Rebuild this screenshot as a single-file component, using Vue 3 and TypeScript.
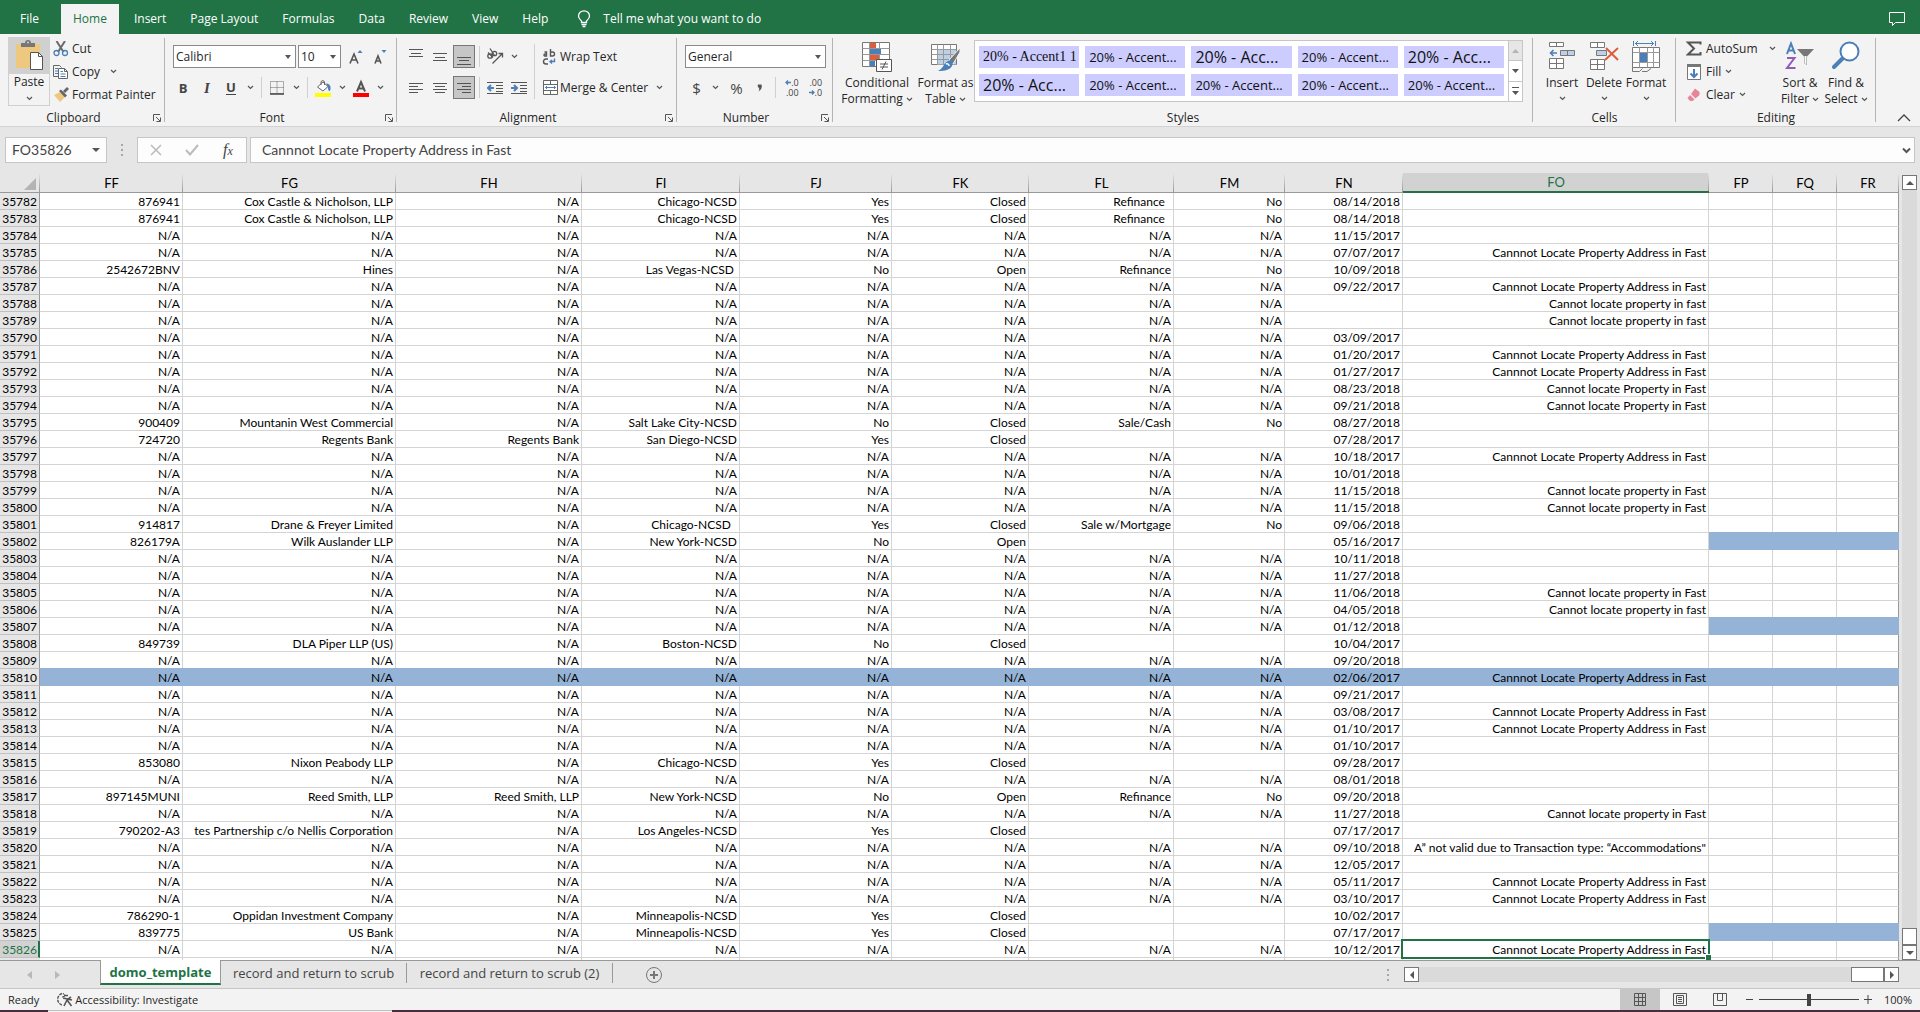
<script setup lang="ts">
import { ref } from 'vue'

interface Column {
  name: string
  width: number | null
}

interface Row {
  id: number
  cells: string[]
  fill: 'none' | 'tail' | 'all'
}

const menu = ['File', 'Home', 'Insert', 'Page Layout', 'Formulas', 'Data', 'Review', 'View', 'Help']

const columns: Column[] = [
  { name: 'FF', width: 143 },
  { name: 'FG', width: 213 },
  { name: 'FH', width: 186 },
  { name: 'FI', width: 158 },
  { name: 'FJ', width: 152 },
  { name: 'FK', width: 137 },
  { name: 'FL', width: 145 },
  { name: 'FM', width: 111 },
  { name: 'FN', width: 118 },
  { name: 'FO', width: 306 },
  { name: 'FP', width: 64 },
  { name: 'FQ', width: 64 },
  { name: 'FR', width: null },
]

const ADDRESS = 'Cannnot Locate Property Address in Fast'
const LOWER = 'Cannot locate property in fast'
const MIXED = 'Cannot locate property in Fast'
const PROPER = 'Cannot locate Property in Fast'

// A row of N/A values in FF to FM, followed by the date and the remark.
const na = (date: string, remark = ''): string[] => [...Array(8).fill('N/A'), date, remark]
const row = (line: string): string[] => line.split('|')

const source: string[][] = [
  row('876941|Cox Castle & Nicholson, LLP|N/A|Chicago-NCSD|Yes|Closed|Refinance  |No|08/14/2018|'),
  row('876941|Cox Castle & Nicholson, LLP|N/A|Chicago-NCSD|Yes|Closed|Refinance  |No|08/14/2018|'),
  na('11/15/2017'),
  na('07/07/2017', ADDRESS),
  row('2542672BNV|Hines|N/A|Las Vegas-NCSD |No|Open|Refinance|No|10/09/2018|'),
  na('09/22/2017', ADDRESS),
  na('', LOWER),
  na('', LOWER),
  na('03/09/2017'),
  na('01/20/2017', ADDRESS),
  na('01/27/2017', ADDRESS),
  na('08/23/2018', PROPER),
  na('09/21/2018', PROPER),
  row('900409|Mountanin West Commercial|N/A|Salt Lake City-NCSD|No|Closed|Sale/Cash|No|08/27/2018|'),
  row('724720|Regents Bank|Regents Bank|San Diego-NCSD|Yes|Closed|||07/28/2017|'),
  na('10/18/2017', ADDRESS),
  na('10/01/2018'),
  na('11/15/2018', MIXED),
  na('11/15/2018', MIXED),
  row('914817|Drane & Freyer Limited|N/A|Chicago-NCSD  |Yes|Closed|Sale w/Mortgage|No|09/06/2018|'),
  row('826179A|Wilk Auslander LLP|N/A|New York-NCSD|No|Open|||05/16/2017|'),
  na('10/11/2018'),
  na('11/27/2018'),
  na('11/06/2018', MIXED),
  na('04/05/2018', LOWER),
  na('01/12/2018'),
  row('849739|DLA Piper LLP (US)|N/A|Boston-NCSD|No|Closed|||10/04/2017|'),
  na('09/20/2018'),
  na('02/06/2017', ADDRESS),
  na('09/21/2017'),
  na('03/08/2017', ADDRESS),
  na('01/10/2017', ADDRESS),
  na('01/10/2017'),
  row('853080|Nixon Peabody LLP|N/A|Chicago-NCSD|Yes|Closed|||09/28/2017|'),
  na('08/01/2018'),
  row('897145MUNI|Reed Smith, LLP|Reed Smith, LLP|New York-NCSD|No|Open|Refinance|No|09/20/2018|'),
  na('11/27/2018', MIXED),
  row('790202-A3|tes Partnership c/o Nellis Corporation|N/A|Los Angeles-NCSD|Yes|Closed|||07/17/2017|'),
  na('09/10/2018', 'A” not valid due to Transaction type: “Accommodations"'),
  na('12/05/2017'),
  na('05/11/2017', ADDRESS),
  na('03/10/2017', ADDRESS),
  row('786290-1|Oppidan Investment Company|N/A|Minneapolis-NCSD|Yes|Closed|||10/02/2017|'),
  row('839775|US Bank|N/A|Minneapolis-NCSD|Yes|Closed|||07/17/2017|'),
  na('10/12/2017', ADDRESS),
]

const FIRST_ROW = 35782
const tailFilled = [35802, 35807, 35825]

const rows: Row[] = source.map((cells, i) => {
  const id = FIRST_ROW + i
  return {
    id,
    cells: [...cells, '', '', ''],
    fill: id === 35810 ? 'all' : tailFilled.includes(id) ? 'tail' : 'none',
  }
})

const activeRow = 35826
const activeColumn = 'FO'

const isFilled = (r: Row, c: number): boolean => r.fill === 'all' || (r.fill === 'tail' && c >= 10)
const isActive = (r: Row, c: number): boolean => r.id === activeRow && columns[c].name === activeColumn

const styleCells: { text: string; kind: string }[] = [
  { text: '20% - Accent1 1', kind: 'roman' },
  { text: '20% - Accent...', kind: '' },
  { text: '20% - Acc...', kind: 'bigger' },
  { text: '20% - Accent...', kind: '' },
  { text: '20% - Acc...', kind: 'bigger' },
  { text: '20% - Acc...', kind: 'bigger' },
  { text: '20% - Accent...', kind: '' },
  { text: '20% - Accent...', kind: '' },
  { text: '20% - Accent...', kind: '' },
  { text: '20% - Accent...', kind: '' },
]

const nameBox = ref('FO35826')
const formula = ref(ADDRESS)
const zoomLevel = ref(100)
</script>

<template>
  <div class="app">
    <nav class="menu" aria-label="Ribbon tabs">
      <button v-for="m in menu" :key="m" type="button" class="tab" :class="{ on: m === 'Home' }">{{ m }}</button>
      <button type="button" class="tell">
        <svg width="14" height="18" viewBox="0 0 14 18" fill="none" stroke="#fff">
          <path d="M4.5 12.5V11C3 9.500 1.500 8.500 1.500 6a5.500 5.200 0 0 1 11 0c0 2.500-1.500 3.500-3 5v1.500z" stroke-width="1.300" />
          <path d="M4.500 14.500h5M5.500 16.500h3" stroke-width="1.300" />
        </svg>
        <span>Tell me what you want to do</span>
      </button>
      <button type="button" class="comments" aria-label="Comments">
        <svg width="18" height="16" viewBox="0 0 18 16" fill="none" stroke="#fff"><path d="M1.500 1.500h15v10H7.500l-3 3v-3h-3z" /></svg>
      </button>
    </nav>

    <div class="ribbon">
      <section class="group clipboard">
        <div class="body">
          <button type="button" class="paste">
            <span class="paste-top">
              <svg width="30" height="32" viewBox="0 0 30 32">
                <path d="M2 4h24v24H2z" fill="#edc87e" />
                <path d="M7 7V3h4a3 3 0 0 1 6 0h4v4z" fill="#777" /><circle cx="14" cy="2.500" r="1" fill="#d0d0d0" />
                <path d="M16.500 12.500h8l4 4v13h-12z" fill="#fff" stroke="#555" /><path d="M24.500 12.500v4h4" fill="none" stroke="#555" />
              </svg>
            </span>
            <span>Paste</span>
            <svg class="chev" width="7" height="5" viewBox="0 0 7 5"><path d="M1 1l2.500 2.500L6 1" /></svg>
          </button>
          <div class="stack">
            <button type="button" class="small">
              <svg width="16" height="16" viewBox="0 0 16 16" fill="none">
                <path d="M3.500 0l7 11M12 0L5 11" stroke="#6a6a6a" stroke-width="2" />
                <circle cx="3.500" cy="12" r="2.500" stroke="#4a7fb8" stroke-width="1.300" /><circle cx="12" cy="12" r="2.500" stroke="#4a7fb8" stroke-width="1.300" />
              </svg>
              <span>Cut</span>
            </button>
            <button type="button" class="small">
              <svg width="16" height="16" viewBox="0 0 16 16" fill="none">
                <path d="M5 12.500H.5V1.500h6l2 2" stroke="#666" /><path d="M2 4.500h3M2 7h3M2 9.500h3" stroke="#4a7fb8" />
                <path d="M5.500 4.500h6l3 3v7h-9z" fill="#fff" stroke="#666" /><path d="M11.500 4.500v3h3" stroke="#666" /><path d="M7.500 7.500h2.500M7.500 10h5M7.500 12.500h5" stroke="#4a7fb8" />
              </svg>
              <span>Copy</span>
              <svg class="chev gap" width="7" height="5" viewBox="0 0 7 5"><path d="M1 1l2.500 2.500L6 1" /></svg>
            </button>
            <button type="button" class="small">
              <svg width="16" height="16" viewBox="0 0 16 16">
                <path d="M1 8l6-3 5 5-5 5z" fill="#edc87e" /><path d="M6 4l2-1.500 6 6-2 2z" fill="#666" /><path d="M10 4l4-4 2 2-4 4z" fill="#666" />
              </svg>
              <span>Format Painter</span>
            </button>
          </div>
        </div>
        <footer><span>Clipboard</span><svg class="launch" width="8" height="8" viewBox="0 0 8 8"><path d="M.5 7V.5H7M3 3l4 4M7.500 3.500v4h-4" /></svg></footer>
      </section>

      <section class="group font">
        <div class="body rows">
          <div class="line">
            <label class="combo w-font"><select aria-label="Font name"><option>Calibri</option></select><i></i></label>
            <label class="combo w-size"><select aria-label="Font size"><option>10</option></select><i></i></label>
            <button type="button" class="ib" aria-label="Increase font size">
              <svg width="14" height="16" viewBox="0 0 14 16"><path d="M1 14.500L5 5l4 9.500M2.500 11h5" fill="none" stroke="#555" stroke-width="1.600" /><path d="M8.500 4L11 1l2.500 3z" fill="#4a7fb8" /></svg>
            </button>
            <button type="button" class="ib" aria-label="Decrease font size">
              <svg width="14" height="16" viewBox="0 0 14 16"><path d="M2 14.500L5 7l3 7.500M3 12h4" fill="none" stroke="#555" stroke-width="1.600" /><path d="M8.500 1L11 4l2.500-3z" fill="#4a7fb8" /></svg>
            </button>
          </div>
          <div class="line second">
            <button type="button" class="ib glyph"><b>B</b></button>
            <button type="button" class="ib glyph serif-i"><i>I</i></button>
            <button type="button" class="ib glyph under"><b>U</b></button>
            <button type="button" class="cb" aria-label="Underline options"><svg class="chev" width="7" height="5" viewBox="0 0 7 5"><path d="M1 1l2.500 2.500L6 1" /></svg></button>
            <span class="sep"></span>
            <button type="button" class="ib" aria-label="Borders">
              <svg width="14" height="14" viewBox="0 0 14 14"><path d="M.5 .5h13v12H.5zM7 .5v12M.5 6.500h13" fill="none" stroke="#666" stroke-dasharray="1 1" /><path d="M0 13h14" stroke="#444" stroke-width="1.500" /></svg>
            </button>
            <button type="button" class="cb" aria-label="Border options"><svg class="chev" width="7" height="5" viewBox="0 0 7 5"><path d="M1 1l2.500 2.500L6 1" /></svg></button>
            <span class="sep"></span>
            <button type="button" class="ib" aria-label="Fill colour">
              <svg width="16" height="18" viewBox="0 0 16 18"><path d="M2.500 8L8 3l5 4.500L8 12z" fill="#fff" stroke="#666" /><path d="M6 6V3a1.800 1.800 0 0 1 3.500 0v3" fill="none" stroke="#666" /><path d="M11 4.500c4 0 5.500 3 4 7.500-2 0-2-2-2-4z" fill="#4a7fb8" /><path d="M0 14h16v4H0z" fill="#ff0" /></svg>
            </button>
            <button type="button" class="cb" aria-label="Fill options"><svg class="chev" width="7" height="5" viewBox="0 0 7 5"><path d="M1 1l2.500 2.500L6 1" /></svg></button>
            <button type="button" class="ib" aria-label="Font colour">
              <svg width="16" height="18" viewBox="0 0 16 18"><path d="M4 12.500L8 3l4 9.500M5.500 9.500h5" fill="none" stroke="#555" stroke-width="2" /><path d="M0 14h16v4H0z" fill="red" /></svg>
            </button>
            <button type="button" class="cb" aria-label="Font colour options"><svg class="chev" width="7" height="5" viewBox="0 0 7 5"><path d="M1 1l2.500 2.500L6 1" /></svg></button>
          </div>
        </div>
        <footer><span>Font</span><svg class="launch" width="8" height="8" viewBox="0 0 8 8"><path d="M.5 7V.5H7M3 3l4 4M7.500 3.500v4h-4" /></svg></footer>
      </section>

      <section class="group align">
        <div class="body">
          <div class="rows">
            <div class="line">
              <button type="button" class="ib" aria-label="Top align"><svg class="ln" width="14" height="16" viewBox="0 0 14 16"><path d="M0 .5h14M2 4.500h10M0 7.500h14" /></svg></button>
              <button type="button" class="ib" aria-label="Middle align"><svg class="ln" width="14" height="16" viewBox="0 0 14 16"><path d="M0 4.500h14M2 8.500h10M0 11.500h14" /></svg></button>
              <button type="button" class="ib on" aria-label="Bottom align"><svg class="ln" width="14" height="16" viewBox="0 0 14 16"><path d="M0 8.500h14M2 11.500h10M0 15.500h14" /></svg></button>
              <span class="sep tight"></span>
              <button type="button" class="ib" aria-label="Orientation">
                <svg width="18" height="18" viewBox="0 0 18 18" fill="none" stroke="#555" stroke-width="1.300">
                  <circle cx="4" cy="8" r="2.200" /><path d="M2 4.500l5 5" /><circle cx="8.500" cy="5.500" r="2.200" /><path d="M4 .5l4.500 7" /><path d="M6.500 15.500L16 6M12.500 5.500h4v4" />
                </svg>
              </button>
              <button type="button" class="cb" aria-label="Orientation options"><svg class="chev" width="7" height="5" viewBox="0 0 7 5"><path d="M1 1l2.500 2.500L6 1" /></svg></button>
            </div>
            <div class="line second">
              <button type="button" class="ib" aria-label="Align left"><svg class="ln" width="14" height="12" viewBox="0 0 14 12"><path d="M0 1.500h14M0 4.500h9M0 7.500h14M0 10.500h9" /></svg></button>
              <button type="button" class="ib" aria-label="Centre"><svg class="ln" width="14" height="12" viewBox="0 0 14 12"><path d="M0 1.500h14M2 4.500h10M0 7.500h14M2 10.500h10" /></svg></button>
              <button type="button" class="ib on" aria-label="Align right"><svg class="ln" width="14" height="12" viewBox="0 0 14 12"><path d="M0 1.500h14M5 4.500h9M0 7.500h14M5 10.500h9" /></svg></button>
              <span class="sep tight"></span>
              <button type="button" class="ib" aria-label="Decrease indent"><svg class="ln" width="16" height="14" viewBox="0 0 16 14"><path d="M0 1.500h16M9 4.500h7M9 7.500h7M9 10.500h7M0 12.500h16" /><path d="M7 7H2M4 4L1 7l3 3" class="blue" /></svg></button>
              <button type="button" class="ib" aria-label="Increase indent"><svg class="ln" width="16" height="14" viewBox="0 0 16 14"><path d="M0 1.500h16M9 4.500h7M9 7.500h7M9 10.500h7M0 12.500h16" /><path d="M0 7h6M3 4l3 3-3 3" class="blue" /></svg></button>
            </div>
          </div>
          <span class="rule"></span>
          <div class="rows wraps">
            <button type="button" class="wide">
              <svg width="16" height="16" viewBox="0 0 16 16" fill="none" stroke="#555" stroke-width="1.400"><path d="M2.500 3h2v4H3a1 1 0 0 1 0-2h1.500M8.500 0v7h2a1.500 1.500 0 0 0 0-4h-2M6 10H4a1.500 1.500 0 0 0 0 5h2" /><path d="M12.500 9.500v3h-4M10 11l-2 1.500 2 2" stroke="#4a7fb8" /></svg>
              <span>Wrap Text</span>
            </button>
            <button type="button" class="wide">
              <svg width="16" height="16" viewBox="0 0 16 16" fill="#fff" stroke="#666"><path d="M1.500 .5h14v14h-14zM1.500 4.500h14M1.500 10.500h14M8.500 .5v4M8.500 10.500v4" /><path d="M3.500 7.500h10M5 6L3.500 7.500 5 9M12 6l1.500 1.500L12 9" fill="none" stroke="#4a7fb8" /></svg>
              <span>Merge &amp; Center</span>
              <svg class="chev end" width="7" height="5" viewBox="0 0 7 5"><path d="M1 1l2.500 2.500L6 1" /></svg>
            </button>
          </div>
        </div>
        <footer><span>Alignment</span><svg class="launch" width="8" height="8" viewBox="0 0 8 8"><path d="M.5 7V.5H7M3 3l4 4M7.500 3.500v4h-4" /></svg></footer>
      </section>

      <section class="group number">
        <div class="body rows">
          <div class="line">
            <label class="combo grow"><select aria-label="Number format"><option>General</option></select><i></i></label>
          </div>
          <div class="line second">
            <button type="button" class="ib big">$</button>
            <button type="button" class="cb" aria-label="Currency options"><svg class="chev" width="7" height="5" viewBox="0 0 7 5"><path d="M1 1l2.500 2.500L6 1" /></svg></button>
            <button type="button" class="ib big percent">%</button>
            <button type="button" class="ib" aria-label="Comma style"><svg width="6" height="8" viewBox="0 0 6 8"><path d="M1 .5h3.500c1 2.500 0 5-3 7 1-2 1-3 0-4-1-1-1-2-.5-3z" fill="#555" /></svg></button>
            <span class="sep"></span>
            <button type="button" class="ib dec">
              <span><svg width="6" height="5" viewBox="0 0 6 5"><path d="M6 2.500H1M3 .5l-2 2 2 2" /></svg>.0</span>
              <span>.00</span>
            </button>
            <button type="button" class="ib dec">
              <span>.00</span>
              <span><svg width="6" height="5" viewBox="0 0 6 5"><path d="M0 2.500h5M3 .5l2 2-2 2" /></svg>.0</span>
            </button>
          </div>
        </div>
        <footer><span>Number</span><svg class="launch" width="8" height="8" viewBox="0 0 8 8"><path d="M.5 7V.5H7M3 3l4 4M7.500 3.500v4h-4" /></svg></footer>
      </section>

      <section class="group styles">
        <div class="body">
          <button type="button" class="large cond">
            <svg width="30" height="32" viewBox="0 0 30 32">
              <path d="M.5 1.500h27v24H.5z" fill="#fff" stroke="#777" /><path d="M.5 7.500h27M.5 13.500h27M.5 19.500h27M7.500 1.500v24M17.500 1.500v24" stroke="#999" />
              <path d="M8 2h6v5H8zM8 14h9v5H8z" fill="#dc5f3c" /><path d="M8 8h11v5H8zM8 20h5v5H8z" fill="#4a7fb8" />
              <path d="M14.500 18.500h15v12h-15z" fill="#fff" stroke="#555" /><path d="M18 23h8M18 26h8M20 28.500l4-8" fill="none" stroke="#555" />
            </svg>
            <span>Conditional</span>
            <span>Formatting <svg class="chev" width="7" height="5" viewBox="0 0 7 5"><path d="M1 1l2.500 2.500L6 1" /></svg></span>
          </button>
          <button type="button" class="large fmt">
            <svg width="30" height="32" viewBox="0 0 30 32">
              <path d="M.5 3.500h25v20H.5z" fill="#fff" stroke="#777" /><path d="M6 8.500h19v15H6z" fill="#bdd0e6" /><path d="M.5 8.500h25M.5 13.500h25M.5 18.500h25M6.500 3.500v20M12.500 3.500v20M19.500 3.500v20" stroke="#999" fill="none" />
              <path d="M29 7L18 19l4 4 7-12z" fill="#777" stroke="#f3f3f3" /><path d="M17 20c4-2 6 1 4 5-2 4-7 5-14 5 5-2 5-7 10-10z" fill="#4a7fb8" /><path d="M15 23a2 2 0 0 1 3 2" fill="none" stroke="#fff" stroke-width="1.500" />
            </svg>
            <span>Format as</span>
            <span>Table <svg class="chev" width="7" height="5" viewBox="0 0 7 5"><path d="M1 1l2.500 2.500L6 1" /></svg></span>
          </button>
          <div class="gallery">
            <div class="swatches">
              <button v-for="(s, i) in styleCells" :key="i" type="button" class="swatch" :class="s.kind">{{ s.text }}</button>
            </div>
            <div class="spin">
              <button type="button" class="off" aria-label="Previous styles"><svg width="7" height="4" viewBox="0 0 7 4"><path d="M0 4l3.500-4L7 4z" /></svg></button>
              <button type="button" aria-label="Next styles"><svg width="7" height="4" viewBox="0 0 7 4"><path d="M0 0l3.500 4L7 0z" /></svg></button>
              <button type="button" aria-label="More styles"><svg width="7" height="8" viewBox="0 0 7 8"><path d="M0 0h7v1H0zM0 4l3.500 4L7 4z" /></svg></button>
            </div>
          </div>
        </div>
        <footer><span>Styles</span></footer>
      </section>

      <section class="group cells">
        <div class="body">
          <button type="button" class="large">
            <svg width="28" height="32" viewBox="0 0 28 32" fill="#fff" stroke="#777">
              <path d="M1.500 1.500h14v4h-14zM8.500 1.500v4M1.500 17.500h14v10h-14zM1.500 22.500h14M8.500 17.500v10" /><path d="M12.500 9.500h14v5h-14zM19.500 9.500v5" fill="#bdd0e6" /><path d="M9 12H3M5.500 9L2.500 12l3 3" fill="none" stroke="#4a7fb8" stroke-width="1.600" />
            </svg>
            <span>Insert</span><span class="cv"><svg class="chev" width="7" height="5" viewBox="0 0 7 5"><path d="M1 1l2.500 2.500L6 1" /></svg></span>
          </button>
          <button type="button" class="large">
            <svg width="30" height="32" viewBox="0 0 30 32" fill="#fff" stroke="#777">
              <path d="M1.500 1.500h14v5h-14zM8.500 1.500v5M1.500 18.500h14v10h-14zM1.500 23.500h14M8.500 18.500v10" /><path d="M7.500 9.500h10v5h-10z" fill="#bdd0e6" /><path d="M17 7l12 12M29 7L16 19" fill="none" stroke="#dc5f3c" stroke-width="2" />
            </svg>
            <span>Delete</span><span class="cv"><svg class="chev" width="7" height="5" viewBox="0 0 7 5"><path d="M1 1l2.500 2.500L6 1" /></svg></span>
          </button>
          <button type="button" class="large">
            <svg width="30" height="32" viewBox="0 0 30 32" fill="none" stroke="#777">
              <path d="M2.500 0v5M24.500 0v5M4 2.500h19M7 0L4.500 2.500 7 5M20 0l2.500 2.500L20 5" stroke="#4a7fb8" /><path d="M1.500 6.500h27v20h-27z" fill="#fff" /><path d="M1.500 11.500h27M1.500 21.500h27M8.500 6.500v20M16.500 6.500v20M22.500 6.500v20" stroke="#999" /><path d="M9 12h7v9H9z" fill="#4a7fb8" stroke="none" /><path d="M1.500 26.500v4h7l3-3M11 30.500h5l4-3" />
            </svg>
            <span>Format</span><span class="cv"><svg class="chev" width="7" height="5" viewBox="0 0 7 5"><path d="M1 1l2.500 2.500L6 1" /></svg></span>
          </button>
        </div>
        <footer><span>Cells</span></footer>
      </section>

      <section class="group editing">
        <div class="body">
          <div class="stack">
            <button type="button" class="small">
              <svg width="16" height="16" viewBox="0 0 16 16"><path d="M14.500 3.500V1.500H2L8 7.500l-6 6h12.500v-2.500" fill="none" stroke="#555" stroke-width="2" /></svg>
              <span>AutoSum</span>
              <svg class="chev gap" width="7" height="5" viewBox="0 0 7 5"><path d="M1 1l2.500 2.500L6 1" /></svg>
            </button>
            <button type="button" class="small">
              <svg width="16" height="16" viewBox="0 0 16 16"><path d="M1.500 1.500h13v14h-13z" fill="#fff" stroke="#777" /><path d="M1 0h14v3H1z" fill="#777" /><path d="M8 5v8M4.500 9.500L8 13l3.500-3.500" fill="none" stroke="#4a7fb8" stroke-width="2" /></svg>
              <span>Fill</span>
              <svg class="chev" width="7" height="5" viewBox="0 0 7 5"><path d="M1 1l2.500 2.500L6 1" /></svg>
            </button>
            <button type="button" class="small">
              <svg width="16" height="16" viewBox="0 0 16 16" fill="#e8849a"><path d="M9 1.500l4.500 3.500v3L9.500 11.500 5 7z" /><path d="M4 8l4.500 4.500-2 1.500H4L1.500 11z" /></svg>
              <span>Clear</span>
              <svg class="chev" width="7" height="5" viewBox="0 0 7 5"><path d="M1 1l2.500 2.500L6 1" /></svg>
            </button>
          </div>
          <button type="button" class="large sort">
            <svg width="30" height="32" viewBox="0 0 30 32" fill="none">
              <path d="M2 13L6 2.500 10 13M3.500 9.500h5" stroke="#4a7fb8" stroke-width="2" /><path d="M2 17h7.500L2 27h8.500" stroke="#8f5cb8" stroke-width="2" /><path d="M12 8h17l-7 7.500V24l-3-2v-6.500z" fill="#777" /><path d="M19.500 15v7l2 1.500V15z" fill="#fff" />
            </svg>
            <span>Sort &amp;</span><span>Filter <svg class="chev" width="7" height="5" viewBox="0 0 7 5"><path d="M1 1l2.500 2.500L6 1" /></svg></span>
          </button>
          <button type="button" class="large find">
            <svg width="30" height="32" viewBox="0 0 30 32"><path d="M3 26l9-9" stroke="#4a7fb8" stroke-width="4" stroke-linecap="round" /><circle cx="18.500" cy="10.500" r="9" fill="#fff" stroke="#4a7fb8" stroke-width="2" /></svg>
            <span>Find &amp;</span><span>Select <svg class="chev" width="7" height="5" viewBox="0 0 7 5"><path d="M1 1l2.500 2.500L6 1" /></svg></span>
          </button>
        </div>
        <footer><span>Editing</span></footer>
      </section>

      <button type="button" class="collapse" aria-label="Collapse the ribbon">
        <svg width="14" height="8" viewBox="0 0 14 8"><path d="M1 7l6-6 6 6" fill="none" stroke="#444" stroke-width="1.300" /></svg>
      </button>
    </div>

    <div class="formula-bar">
      <label class="name-box"><input v-model="nameBox" aria-label="Name box" /><i></i></label>
      <svg class="dots" width="2" height="12" viewBox="0 0 2 12"><path d="M0 1h2M0 6h2M0 11h2" stroke="#a6a6a6" stroke-width="2" /></svg>
      <div class="entry">
        <button type="button" aria-label="Cancel"><svg width="12" height="12" viewBox="0 0 12 12"><path d="M1 1l10 10M11 1L1 11" fill="none" stroke="#bbb" stroke-width="1.500" /></svg></button>
        <button type="button" aria-label="Enter"><svg width="14" height="12" viewBox="0 0 14 12"><path d="M1 6l4 4.500L13 1" fill="none" stroke="#bbb" stroke-width="2" /></svg></button>
        <button type="button" class="fx"><i>f</i><small>x</small></button>
      </div>
      <label class="formula"><input v-model="formula" aria-label="Formula bar" /><svg width="9" height="7" viewBox="0 0 9 7"><path d="M1 1.500l3.500 3.500L8 1.500" fill="none" stroke="#555" stroke-width="2" /></svg></label>
    </div>

    <div class="sheet">
      <table>
        <colgroup>
          <col class="c-id" />
          <col v-for="c in columns" :key="c.name" :style="c.width ? { width: c.width + 'px' } : undefined" />
        </colgroup>
        <thead>
          <tr>
            <th class="corner"><svg width="12" height="12" viewBox="0 0 12 12"><path d="M12 0v12H0z" fill="#b4b4b4" /></svg></th>
            <th v-for="c in columns" :key="c.name" scope="col" :class="{ on: c.name === activeColumn }">{{ c.name }}</th>
          </tr>
        </thead>
        <tbody>
          <tr v-for="r in rows" :key="r.id">
            <th scope="row" :class="{ on: r.id === activeRow }"><div class="val">{{ r.id }}</div></th>
            <td v-for="(v, c) in r.cells" :key="c" :class="{ fill: isFilled(r, c), active: isActive(r, c) }">
              <div class="val">{{ v }}</div>
            </td>
          </tr>
          <tr class="tail" aria-hidden="true">
            <th></th>
            <td v-for="c in columns" :key="c.name"></td>
          </tr>
        </tbody>
      </table>
      <div class="vscroll">
        <button type="button" aria-label="Scroll up"><svg width="8" height="4" viewBox="0 0 8 4"><path d="M0 4l4-4 4 4z" /></svg></button>
        <div class="track"></div>
        <div class="thumb"></div>
        <button type="button" aria-label="Scroll down"><svg width="8" height="4" viewBox="0 0 8 4"><path d="M0 0l4 4 4-4z" /></svg></button>
      </div>
    </div>

    <div class="tabs">
      <div class="nav">
        <button type="button" aria-label="Previous sheet"><svg width="5" height="8" viewBox="0 0 5 8"><path d="M5 0v8L0 4z" fill="#b8b8b8" /></svg></button>
        <button type="button" aria-label="Next sheet"><svg width="5" height="8" viewBox="0 0 5 8"><path d="M0 0v8l5-4z" fill="#b8b8b8" /></svg></button>
      </div>
      <button type="button" class="sheet-tab on">domo_template</button>
      <button type="button" class="sheet-tab t2">record and return to scrub</button>
      <button type="button" class="sheet-tab t3">record and return to scrub (2)</button>
      <button type="button" class="add" aria-label="New sheet">
        <svg width="18" height="18" viewBox="0 0 18 18" fill="none" stroke="#777"><circle cx="9" cy="9" r="7.500" /><path d="M9 5v8M5 9h8" stroke-width="2" /></svg>
      </button>
      <svg class="dots" width="2" height="12" viewBox="0 0 2 12"><path d="M0 1h2M0 6h2M0 11h2" stroke="#a6a6a6" stroke-width="2" /></svg>
      <div class="hscroll">
        <button type="button" aria-label="Scroll left"><svg width="4" height="8" viewBox="0 0 4 8"><path d="M4 0v8L0 4z" /></svg></button>
        <div class="track"></div>
        <div class="thumb"></div>
        <button type="button" aria-label="Scroll right"><svg width="4" height="8" viewBox="0 0 4 8"><path d="M0 0v8l4-4z" /></svg></button>
      </div>
    </div>

    <div class="status">
      <span class="ready">Ready</span>
      <svg width="17" height="16" viewBox="0 0 17 16" fill="none" stroke="#555"><path d="M6 1.500A6 6 0 0 0 6 13" stroke-width="1.400" stroke-dasharray="3 1" /><path d="M8 3.500h4M7 6l9 2M15 5l-4 3-3 6M11 8l4.500 6" stroke-width="1.600" /><path d="M7 1l2 3-3 1" /></svg>
      <span>Accessibility: Investigate</span>
      <div class="views">
        <button type="button" class="on" aria-label="Normal"><svg width="12" height="13" viewBox="0 0 12 13" fill="none" stroke="#555"><path d="M.5 .5h11v12H.5zM.5 4.500h11M.5 8.500h11M4.500 .5v12M8.500 .5v12" /></svg></button>
        <button type="button" aria-label="Page layout"><svg width="14" height="13" viewBox="0 0 14 13" fill="none" stroke="#555"><path d="M.5 .5h13v12H.5zM3.500 2.500h7v8h-7zM5 4.500h4M5 6.500h4M5 8.500h4" /></svg></button>
        <button type="button" aria-label="Page break preview"><svg width="14" height="13" viewBox="0 0 14 13" fill="none" stroke="#555"><path d="M.5 .5h13v12H.5zM4.500 .5v7h5v-7" /></svg></button>
      </div>
      <div class="zoom">
        <button type="button" aria-label="Zoom out"><svg width="8" height="9" viewBox="0 0 8 9"><path d="M0 4.500h7" stroke="#444" /></svg></button>
        <input v-model="zoomLevel" type="range" min="0" max="200" aria-label="Zoom" />
        <button type="button" aria-label="Zoom in"><svg width="8" height="9" viewBox="0 0 8 9"><path d="M0 4.500h8M4 0v9" stroke="#444" /></svg></button>
        <span class="pct">{{ zoomLevel }}%</span>
      </div>
    </div>
    <div class="edge"><span></span></div>
  </div>
</template>

<style>
body {
  margin: 0;
  background: #e6e6e6;
}
</style>

<style scoped>
.app {
  display: flex;
  flex-direction: column;
  min-height: 100vh;
  background: #e6e6e6;
  color: #262626;
  font: 12px/16px 'Open Sans', 'Noto Sans', sans-serif;
}
.app *,
.app *::before,
.app *::after {
  box-sizing: border-box;
}
button {
  margin: 0;
  padding: 0;
  border: 0;
  background: none;
  color: inherit;
  font: inherit;
  white-space: nowrap;
}
input,
select {
  margin: 0;
  border: 0;
  background: none;
  color: inherit;
  font: inherit;
  outline: none;
  appearance: none;
  min-width: 0;
}
svg {
  display: block;
  flex: none;
}
.chev {
  fill: none;
  stroke: #555;
  stroke-width: 1.2;
}

/* Menu */
.menu {
  display: flex;
  align-items: flex-end;
  height: 34px;
  background: #217346;
  color: #fff;
}
.tab {
  height: 30px;
  padding: 0 12px;
}
.tab:first-child {
  padding: 0 22px 0 20px;
}
.tab.on {
  margin-right: 3px;
  background: #f3f3f3;
  color: #217346;
}
.tell {
  display: flex;
  align-items: center;
  gap: 12px;
  height: 30px;
  margin-left: 17px;
}
.comments {
  height: 30px;
  margin: 0 14px 0 auto;
}

/* Ribbon */
.ribbon {
  display: flex;
  height: 93px;
  background: #f3f3f3;
  border-bottom: 1px solid #d2d2d2;
}
.group {
  display: flex;
  flex: none;
  flex-direction: column;
  position: relative;
}
.group::after {
  content: '';
  position: absolute;
  top: 4px;
  right: 0;
  bottom: 4px;
  width: 1px;
  background: #b4b4b4;
}
.clipboard { width: 165px; }
.font { width: 232px; }
.align { width: 280px; }
.number { width: 156px; }
.styles { flex: 1 1 0; min-width: 0; }
.cells { width: 143px; }
.editing { width: 200px; }
.body {
  display: flex;
  height: 76px;
}
footer {
  display: flex;
  align-items: center;
  justify-content: center;
  height: 16px;
}
footer span {
  flex: 1;
  text-align: center;
}
.launch {
  margin: 0 4px 0 6px;
  fill: none;
  stroke: #555;
}
.paste {
  display: flex;
  flex-direction: column;
  align-items: center;
  width: 42px;
  height: 69px;
  margin: 3px 3px 0 8px;
  border: 1px solid #d0d0d0;
}
.paste-top {
  display: grid;
  place-items: center;
  align-self: stretch;
  height: 36px;
  background: #d0d0d0;
}
.paste .chev {
  margin-top: 6px;
}
.stack {
  display: flex;
  flex-direction: column;
  padding-top: 3px;
}
.small {
  display: flex;
  align-items: center;
  gap: 4px;
  height: 23px;
}
.clipboard .small {
  gap: 3px;
}
.chev.gap {
  margin-left: 7px;
}
.rows {
  display: flex;
  flex-direction: column;
  gap: 8px;
  padding-top: 11px;
}
.line {
  display: flex;
  align-items: center;
  height: 23px;
}
.ib {
  display: grid;
  place-items: center;
  width: 24px;
  height: 23px;
}
.cb {
  display: grid;
  place-items: center;
  width: 14px;
  height: 23px;
}
.ib.on {
  width: 22px;
  margin: 0 1px;
  background: #c6c6c6;
  border: 1px solid #777;
}
.sep {
  width: 1px;
  height: 21px;
  margin: 0 3px 0 4px;
  background: #d0d0d0;
}
.sep.tight {
  margin: 0 3px;
}
.combo {
  display: flex;
  align-items: center;
  height: 23px;
  background: #fff;
  border: 1px solid #8a8a8a;
  color: #262626;
}
.combo select {
  flex: 1;
  padding: 0 0 0 2px;
}
.combo i,
.name-box i {
  margin-right: 4px;
  border: 3px solid transparent;
  border-top: 4px solid #555;
  border-bottom: 0;
}
.w-font { width: 123px; }
.w-size { width: 43px; margin: 0 3px 0 2px; }
.grow { flex: 1; }
.font .body { padding-left: 8px; }
.font .second { margin-left: -2px; }
.glyph {
  color: #444;
  font-size: 13px;
}
.serif-i {
  font-family: 'Liberation Serif', serif;
  font-size: 15px;
  font-weight: 700;
}
.under b {
  border-bottom: 1px solid #444;
  line-height: 13px;
}
.align .body { padding-left: 7px; }
.ln {
  fill: none;
  stroke: #555;
}
.ln .blue {
  stroke: #4a7fb8;
  stroke-width: 2;
}
.rule {
  width: 1px;
  height: 55px;
  margin: 10px 7px 0 3px;
  background: #d0d0d0;
}
.wide {
  display: flex;
  align-items: center;
  gap: 2px;
  height: 23px;
}
.wide .end {
  margin-left: 6px;
}
.number .body { padding: 11px 7px 0 8px; }
.big {
  color: #444;
  font-size: 15px;
}
.percent { margin-left: 3px; }
.dec {
  align-content: center;
  justify-items: end;
  padding-right: 4px;
  color: #444;
  font-size: 9px;
  line-height: 10px;
}
.dec span {
  display: flex;
  align-items: center;
  height: 10px;
}
.dec svg {
  fill: none;
  stroke: #4a7fb8;
  stroke-width: 1.3;
}
.large {
  display: flex;
  flex-direction: column;
  align-items: center;
  height: 72px;
  padding-top: 7px;
}
.large > svg {
  margin-bottom: 2px;
}
.large > span {
  display: flex;
  align-items: center;
  gap: 3px;
}
.cv {
  height: 14px;
}
.cond { width: 88px; }
.fmt { width: 49px; }
.gallery {
  display: flex;
  flex: 1;
  height: 62px;
  margin: 6px 10px 0 4px;
  background: #fff;
  border: 1px solid #c6c6c6;
}
.swatches {
  display: grid;
  flex: 1;
  grid-template-columns: repeat(5, 1fr);
  gap: 6px;
  padding: 5px 4px;
}
.swatch {
  height: 22px;
  padding-left: 4px;
  overflow: hidden;
  background: #ccccff;
  color: #111;
  font-size: 13px;
  text-align: left;
}
.bigger {
  font-size: 16px;
  line-height: 18px;
}
.roman {
  font-family: 'Liberation Serif', serif;
  font-size: 14px;
}
.spin {
  display: flex;
  flex-direction: column;
  width: 14px;
  border-left: 1px solid #c6c6c6;
}
.spin button {
  display: grid;
  flex: 1;
  place-items: center;
  fill: #555;
}
.spin button + button {
  border-top: 1px solid #c6c6c6;
}
.spin .off {
  background: #e6e6e6;
  fill: #b4b4b4;
}
.cells .body {
  padding: 0 9px 0 8px;
}
.cells .large {
  flex: 1;
}
.editing .body {
  padding-left: 10px;
}
.editing .stack {
  width: 91px;
}
.sort,
.find {
  width: 46px;
}
.collapse {
  display: flex;
  align-items: flex-end;
  justify-content: flex-end;
  width: 44px;
  padding: 0 9px 4px 0;
}

/* Formula bar */
.formula-bar {
  display: flex;
  align-items: center;
  height: 46px;
  padding: 0 5px;
  color: #444;
  font-size: 13px;
}
.name-box,
.entry,
.formula {
  display: flex;
  align-items: center;
  height: 26px;
  background: #fdfdfd;
  border: 1px solid #c6c6c6;
}
.name-box { width: 102px; }
.name-box input {
  flex: 1;
  padding: 0 0 0 6px;
  font-family: Lato, sans-serif;
  font-size: 14px;
}
.name-box i {
  margin-right: 6px;
  border-width: 4px 4px 0;
}
.formula-bar .dots {
  margin: 0 14px;
}
.entry {
  width: 110px;
  margin-right: 3px;
}
.entry button {
  display: grid;
  flex: 1;
  place-items: center;
}
.entry .fx {
  display: flex;
  align-items: baseline;
  justify-content: center;
  font: 16px/16px 'Liberation Serif', serif;
}
.fx small {
  font: italic 12px/16px 'Liberation Serif', serif;
}
.formula {
  flex: 1;
  padding-right: 3px;
}
.formula input {
  flex: 1;
  padding: 0 0 0 11px;
  font-family: Lato, sans-serif;
  font-size: 14px;
}

/* Grid */
.sheet {
  display: flex;
  align-items: stretch;
  border-bottom: 1px solid #999;
}
table {
  flex: 1;
  width: 0;
  table-layout: fixed;
  border-collapse: separate;
  border-spacing: 0;
  color: #000;
  font: 12px/16px Lato, sans-serif;
}
.c-id { width: 40px; }
th,
td {
  padding: 0;
  font-weight: 400;
}
thead th {
  height: 20px;
  padding-top: 1px;
  background: linear-gradient(#e6e6e6, #999) right / 1px 100% no-repeat #e6e6e6;
  border-bottom: 1px solid #999;
  font-size: 13px;
  line-height: 18px;
}
thead th.on {
  background-color: #d2d2d2;
  border-bottom: 2px solid #217346;
  color: #217346;
  line-height: 17px;
}
.corner svg {
  margin: 2px 0 0 24px;
}
tbody th {
  height: 17px;
  background: #e6e6e6;
  border-right: 1px solid #999;
  border-bottom: 1px solid #c0c0c0;
}
tbody th.on {
  background: #d2d2d2;
  border-right: 2px solid #217346;
  color: #217346;
}
td {
  position: relative;
  background: #fff;
  border-right: 1px solid #d4d4d4;
  border-bottom: 1px solid #d4d4d4;
}
td:last-child {
  border-right-color: #999;
}
.val {
  display: flex;
  justify-content: flex-end;
  height: 16px;
  padding: 1px 2px 0 0;
  overflow: hidden;
  white-space: pre;
}
th.on .val {
  padding-right: 1px;
}
td.fill {
  background: #95b3d7;
  border-color: #95b3d7;
  box-shadow: 0 -1px #95b3d7;
}
td.active {
  z-index: 1;
}
td.active::before {
  content: '';
  position: absolute;
  inset: -2px;
  border: 2px solid #217346;
}
td.active::after {
  content: '';
  position: absolute;
  right: -3px;
  bottom: -3px;
  width: 6px;
  height: 6px;
  background: #217346;
  border-top: 1px solid #fff;
  border-left: 1px solid #fff;
}
.tail th,
.tail td {
  height: 2px;
  border-bottom: 0;
}
.tail th {
  border-right: 0;
}
.vscroll {
  display: flex;
  flex-direction: column;
  width: 21px;
  padding: 2px 3px 0;
}
.vscroll button,
.hscroll button,
.thumb {
  display: grid;
  flex: none;
  place-items: center;
  width: 15px;
  height: 15px;
  background: #fff;
  border: 1px solid #777;
  fill: #555;
}
.track {
  flex: 1;
  background: #dadada;
}
.vscroll .thumb {
  height: 17px;
}

/* Sheet tabs */
.tabs {
  display: flex;
  align-items: center;
  height: 27px;
  color: #444;
  font-size: 13px;
}
.nav {
  display: flex;
  gap: 23px;
  width: 100px;
  padding-left: 27px;
}
.sheet-tab {
  align-self: flex-start;
  height: 20px;
  margin-top: 2px;
  border-right: 1px solid #999;
}
.sheet-tab.on {
  width: 121px;
  height: 25px;
  margin-top: -1px;
  background: #fff;
  border-bottom: 2px solid #217346;
  border-left: 1px solid #999;
  color: #217346;
  font-weight: 700;
}
.t2 { width: 186px; }
.t3 { width: 206px; }
.add {
  margin-left: 32px;
}
.tabs .dots {
  margin: 0 15px 0 auto;
}
.hscroll {
  display: flex;
  width: 26%;
  max-width: 495px;
  margin-right: 21px;
}
.hscroll .thumb {
  width: 33px;
}

/* Status bar */
.status {
  display: flex;
  align-items: center;
  height: 22px;
  padding-left: 8px;
  background: #f3f3f3;
  border-top: 1px solid #c6c6c6;
  font-size: 11px;
}
.ready {
  margin-right: 17px;
}
.status > svg {
  margin-right: 2px;
}
.views {
  display: flex;
  align-self: stretch;
  margin-left: auto;
}
.views button {
  display: grid;
  place-items: center;
  width: 40px;
}
.views .on {
  background: #c6c6c6;
}
.zoom {
  display: flex;
  align-items: center;
  gap: 5px;
  padding: 0 8px 0 6px;
}
.zoom input {
  width: 100px;
  height: 12px;
  background: linear-gradient(#444, #444) center / 100% 1px no-repeat;
}
.zoom input::-webkit-slider-thumb {
  width: 4px;
  height: 12px;
  appearance: none;
  background: #444;
}
.zoom .pct {
  margin-left: 7px;
}
.edge {
  height: 2px;
  padding-left: 48px;
  background: #4a2c3a;
}
.edge span {
  display: block;
  width: 344px;
  height: 2px;
  background: #f3f3f3;
  border-top: 1px solid #c0c0c0;
}
</style>
